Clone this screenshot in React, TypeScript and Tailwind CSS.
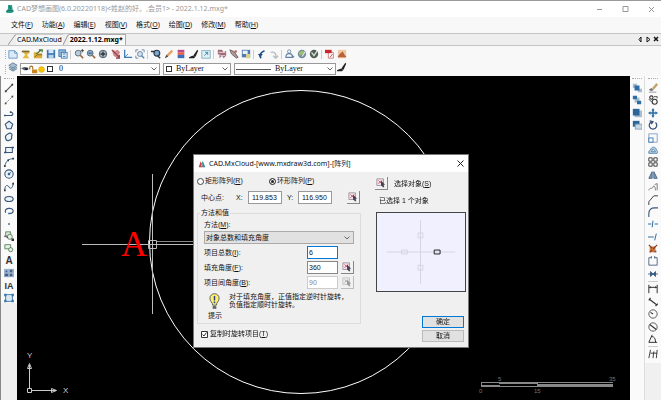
import React, { useState } from "react";
import clsx from "clsx";

const NAVY = "#3a5578";
const BLUE = "#2f6ea5";
const INK = "#333";

// every icon is drawn on a 12x12 grid
const icons: Record<string, React.ReactNode> = {
  // standard toolbar
  new: <><path d="M1 2h7l3 3v6H1z" fill="#dcebf8" stroke="#5d8fc0" /><path d="M8 2v3h3" fill="none" stroke="#5d8fc0" /></>,
  open: <><path d="M1 2h9v3l-3 2 3 4H2l3-4z" fill="#e6b93d" /><path d="M1 2h9v2H1z" fill="#7b6a3c" /></>,
  openWeb: <><path d="M1 4h4l1 1h5v6H1z" fill="#dcae3a" /><path d="M4 6l6-5M7 1h4v3" fill="none" stroke="#4c7a3b" strokeWidth="1.6" /><path d="M2 10l3-3h6" fill="none" stroke="#7a6524" /></>,
  save: <><rect x="1" y="1" width="10" height="10" fill="#3c78b4" /><rect x="3" y="1" width="6" height="4" fill="#d5e6f5" /><rect x="3" y="7" width="6" height="4" fill="#bcd2e6" /></>,
  saveAs: <><rect x="1" y="1" width="8" height="8" fill="#8fb4d6" stroke="#3c78b4" /><rect x="4" y="4" width="7" height="7" fill="#d5e6f5" stroke="#3c78b4" /><path d="M6 6h3M6 9h3" stroke="#3c78b4" /></>,
  zoomWindow: <><circle cx="5" cy="5" r="3.5" fill="#b9cbd9" stroke="#51616e" /><path d="M7.5 7.5l3.5 3.5" stroke="#9b6a45" strokeWidth="2" /><path d="M8 2h4M10 0v4" stroke={INK} /></>,
  zoom: <><circle cx="5" cy="5" r="3.5" fill="#8bb2d6" stroke="#51616e" /><path d="M7.5 7.5l3.5 3.5" stroke="#9b6a45" strokeWidth="2" /><path d="M3 5h4" stroke={INK} /></>,
  zoomAll: <><circle cx="6" cy="6" r="4.5" fill="#a9b9c6" stroke="#3f4b55" /><path d="M3 6h6M6 3v6" stroke={INK} strokeWidth="1.6" /></>,
  pan: <><path d="M1 1l4 1 3-1 3 3-2 3 2 3-3 1-5-3z" fill="#d58888" /><path d="M1 1l9 9M10 7v4H6" fill="none" stroke="#8d3c4c" strokeWidth="1.4" /></>,
  ucs: <><path d="M2 1v9h9" fill="none" stroke="#3a7bb8" strokeWidth="1.5" /><path d="M2 10l4-4" stroke="#3a7bb8" /></>,
  zoomBox: <><path d="M1 4V1h3M8 1h3v3M1 8v3h3" fill="none" stroke="#5d7e9c" /><circle cx="6" cy="6" r="3" fill="#cfdfec" stroke="#5d7e9c" /><path d="M8 8l3 3" stroke="#5d7e9c" strokeWidth="1.6" /></>,
  find: <><circle cx="7" cy="5" r="3.5" fill="#7ba5cf" stroke="#2b3947" strokeWidth="1.4" /><path d="M0 3h5M8 8l3 3" stroke="#2b3947" strokeWidth="1.8" /></>,
  pencil: <><path d="M1 11l2-4 6-6 2 2-6 6z" fill="#e6a467" /><path d="M1 11l2-4 2 2z" fill="#444" /></>,
  layers3: <><rect x="2" y="1" width="8" height="3" fill="#b64a8c" /><rect x="2" y="4" width="8" height="3" fill="#e35b49" /><rect x="2" y="7" width="8" height="4" fill="#3d6db5" /></>,
  brush: <><path d="M5 8l5-7 1 1-3 7z" fill="#222" /><path d="M0 10l4-2 4 1-2 2H0z" fill="#222" /></>,
  expand: <><rect x="1" y="2" width="10" height="9" fill="#dff0f5" stroke="#77a9bd" /><path d="M4 8l4-4M5 4h3v3" fill="none" stroke="#2f80a5" /></>,
  palette: <><path d="M1 1h5l2 3 3-2v6l-3 3-2-3-3 3V6L1 7z" fill="#a16b7a" /><path d="M2 4h8M4 8h6" stroke="#f2e7e2" /></>,
  tool: <><path d="M1 1l5 2 5 7-2 1-6-5z" fill="#a59a9a" stroke="#6d5d60" /><circle cx="8" cy="3" r="1.5" fill="#c2584c" /></>,
  picture: <><rect x="1" y="1" width="10" height="9" fill="#4d79b5" /><rect x="2" y="2" width="6" height="4" fill="#e9f0f6" /><path d="M6 6h5v5H6z" fill="#d9d187" /></>,
  undo: <><path d="M5 11C2 8 4 4 9 2" fill="none" stroke="#234f86" strokeWidth="2" /><path d="M1 6l3 4 3-4z" fill="#234f86" /></>,
  redo: <path d="M2 4c5-1 7 2 6 6M5 8l3 3 3-3" fill="none" stroke="#b4bcc4" strokeWidth="1.6" />,
  people: <><circle cx="5" cy="3" r="2" fill="none" stroke="#6180a4" /><path d="M1 10c0-6 8-6 8 0zM7 6l4 4" fill="none" stroke="#6180a4" strokeWidth="1.3" /></>,
  globe: <><circle cx="6" cy="6" r="5" fill="#6f8ca0" /><path d="M2 4l4-2 3 1-2 3-4 2z" fill="#9fc06b" /><path d="M6 9l4-6" stroke="#eee" strokeWidth="1.4" /></>,
  globeDark: <><circle cx="6" cy="6" r="5" fill="#4f5f58" /><path d="M3 4l3 4 4-6" fill="none" stroke="#d7e3d2" strokeWidth="1.6" /></>,
  pdf: <><path d="M4 4h6v7H4z" fill="#fff" stroke="#b77" /><rect x="0" y="1" width="8" height="4" fill="#c9262c" /><path d="M6 10l3-4" stroke="#c9262c" /></>,
  photo: <><rect x="1" y="1" width="10" height="10" fill="#efc6a5" /><path d="M1 9l3-4 3-2 2 4 2 2v1H1z" fill="#b76339" /></>,
  layerStack: <path d="M6 1l5 3-5 3-5-3zM1 6l5 3 5-3M1 8l5 3 5-3" fill="#a9c0d4" stroke="#607c96" />,
  eye: <><path d="M0 5l5-2 6 1v3L5 8z" fill="#54606c" /><circle cx="8" cy="6" r="2" fill="#222" /></>,
  unlock: <><path d="M1 6V3c0-2 4-2 4 0v3" fill="none" stroke="#a06a18" strokeWidth="1.4" /><rect x="4" y="6" width="7" height="5" fill="#c98522" /></>,
  sun: <circle cx="6" cy="6" r="5" fill="#f7c500" stroke="#dba51c" />,
  // draw toolbar
  line: <><path d="M2 10l8-8" stroke="#555" strokeWidth="1.4" /><path d="M1 9h2v2H1zM9 1h2v2H9z" fill={INK} /></>,
  xline: <><path d="M1 11L11 1" stroke="#8a8a8a" strokeDasharray="3 1" /><path d="M1 9h2v2H1zM9 1h2v2H9z" fill="#444" /></>,
  pline: <><path d="M1 9h7c4 0 3-4 0-4" fill="none" stroke={NAVY} strokeWidth="1.3" /><path d="M0 8h2v2H0zM7 4h2v2H7z" fill={NAVY} /></>,
  polygon: <path d="M6 1.500l4.500 3.500-2 5.500h-5l-2-5.500z" fill="#e4eef7" stroke={NAVY} strokeWidth="1.300" />,
  cloud: <path d="M5 2c3-2 6 1 4 3 1 3-1 5-3 5-3 1-4-1-4-3-1-2 1-4 3-5z" fill="#eef3f8" stroke={NAVY} strokeWidth="1.4" />,
  rect: <><rect x="2" y="3" width="8" height="6" fill="#eef3f8" stroke={NAVY} strokeWidth="1.2" /><path d="M0 8h3v2H0zM9 2h3v2H9z" fill={NAVY} /></>,
  arc: <><path d="M1 11C2 5 6 2 11 2" fill="none" stroke={BLUE} strokeWidth="1.2" /><path d="M0 10h2v2H0zM4 3h2v2H4zM10 1h2v2h-2z" fill={INK} /></>,
  circle: <><circle cx="6" cy="6" r="5" fill="#f2f6fa" stroke={NAVY} strokeWidth="1.3" /><path d="M6 6l3-3M5 5h2v2H5z" stroke={BLUE} /></>,
  spline: <><path d="M1 10c0-8 4-6 5-4s4 3 5-4" fill="none" stroke={NAVY} strokeWidth="1.2" /><path d="M0 9h2v2H0zM10 1h2v2h-2z" fill={INK} /></>,
  ellipse: <ellipse cx="6" cy="6" rx="5" ry="3" fill="#eef3f8" stroke={NAVY} strokeWidth="1.4" />,
  ellipseArc: <><path d="M2 8C-1 2 11 1 11 6c0 2-2 3-5 3" fill="none" stroke={NAVY} strokeWidth="1.4" /><path d="M5 8h2v2H5z" fill={BLUE} /></>,
  point: <path d="M5 5h2v2H5z" fill={NAVY} />,
  insertBlock: <><path d="M2 1h6v5H2z" fill="#dce8dc" stroke="#4d7a55" /><circle cx="7" cy="7" r="3" fill="#e7f0e7" stroke="#4d7a55" /><path d="M0 6l5 2" stroke={INK} /><path d="M9 9h3v3H9z" fill={INK} /></>,
  makeBlock: <><path d="M1 2h7v5H1z" fill="#e7f0e7" stroke="#4d7a55" /><circle cx="8" cy="8" r="2.500" fill="#e7f0e7" stroke="#4d7a55" /></>,
  hatch: <><rect x="0" y="1" width="12" height="10" fill="#9fb3cd" /><path d="M2 3h2v2H2zM1 7h4v3H1zM7 2h3v3H7zM7 7h3v3H7z" fill="#44618b" /></>,
  region: <><rect x="2" y="2" width="8" height="8" fill="#d7e7f4" stroke={BLUE} /><path d="M0 1h3v3H0zM9 1h3v3H9zM0 8h3v3H0zM9 8h3v3H9z" fill={BLUE} opacity=".8" /></>,
  // draw order toolbar
  orderFront: <><path d="M1 1h5v5H1zM7 7h5v4H7z" fill="#a9bccb" /><path d="M3 3h6v6H3z" fill={BLUE} /></>,
  orderBack: <><path d="M3 3h6v6H3z" fill="#a9bccb" /><path d="M1 1h5v4H1zM6 7h5v4H6z" fill={BLUE} /></>,
  orderAbove: <><path d="M3 3h9v8H3z" fill="#a9bccb" /><path d="M1 1h8v8H1z" fill="#2c6698" /></>,
  orderUnder: <><path d="M1 1h8v7H1z" fill="#2c6698" /><path d="M4 5h8v6H4z" fill="#c8d8e4" stroke="#7e9ab2" /></>,
  // modify toolbar
  erase: <><path d="M1 8l3 2 3-2-3-2z" fill="#777" /><path d="M5 6l5-6 2 2-5 6z" fill="#c0a465" /><path d="M1 11h9" stroke="#888" /></>,
  copy: <><circle cx="4" cy="3" r="2" fill="none" stroke={INK} strokeWidth="1.3" /><circle cx="8" cy="8" r="3" fill="none" stroke={INK} strokeWidth="1.3" /><path d="M1 5l4 4M7 2h4v2" fill="none" stroke={INK} /></>,
  move: <path d="M6 0l2 3H7v2h2V4l3 2-3 2V7H7v2h1l-2 3-2-3h1V7H3v1L0 6l3-2v1h2V3H4z" fill={BLUE} />,
  rotate: <path d="M9 3c3 3 1 8-3 8S0 6 3 3l2-1M2 1l4 1-2 3" fill="none" stroke={NAVY} strokeWidth="1.5" />,
  scale: <><rect x="1" y="1" width="10" height="10" fill="#f5f9fc" stroke="#7c9bb8" /><rect x="1" y="6" width="5" height="5" fill="#fff" stroke={BLUE} /></>,
  offset: <><path d="M1 10c-1-3 2-4 2-4 1-5 7-4 7 0 2 1 2 3 1 4z" fill="#b5cde0" stroke="#4c7fa9" /><path d="M4 8l2-3 3 3z" fill="#fff" stroke="#4c7fa9" /></>,
  array: <path d="M1 1h4v4H1zM7 1h4v4H7zM1 7h4v4H1zM7 7h4v4H7z" fill="#fff" stroke="#444" strokeWidth="1.2" />,
  mirror: <><path d="M5 2v8H1z" fill="#7f9fc0" stroke={NAVY} /><path d="M7 2v8h4z" fill="#7f9fc0" stroke={NAVY} /></>,
  editSpline: <path d="M1 10c1-4 4-1 5-4s3 0 3 4M8 3l3-1v8" fill="none" stroke="#666" />,
  chamfer: <path d="M1 12V8l6-7h5" fill="none" stroke="#444" strokeWidth="1.2" />,
  fillet: <path d="M1 12V8c0-5 3-7 7-7h4" fill="none" stroke={NAVY} strokeWidth="1.3" />,
  trim: <path d="M0 6h4M8 6h4M6 2l-1 8" fill="none" stroke={BLUE} strokeWidth="1.2" />,
  extend: <path d="M0 6h7M10 2L8 10" fill="none" stroke={BLUE} strokeWidth="1.2" />,
  explode: <><path d="M2 3h7v7H2z" fill="#c77942" /><path d="M1 1l4 4M11 1L6 6M2 10l3-3" stroke="#8a3a20" strokeWidth="1.4" /><path d="M8 8h2v2H8z" fill="#555" /></>,
  breakAt: <path d="M4 2H1v9h10V2H8M4 0v3M8 0v3" fill="none" stroke={NAVY} />,
  join: <path d="M0 6h5M7 6h5M3 3l3 3-3 3zM9 3L6 6l3 3z" fill={BLUE} stroke={NAVY} />,
  // dimension toolbar
  dimLinear: <path d="M1 1v10M11 1v10M1 4h10M3 3v2M9 3v2" fill="none" stroke={INK} strokeWidth="1.2" />,
  dimAligned: <path d="M2 3l8 6M1 4l2-3M9 11l3-3" fill="none" stroke={INK} strokeWidth="1.4" />,
  dimRadius: <><circle cx="6" cy="6" r="5" fill="none" stroke="#444" /><path d="M6 6L3 4" stroke={INK} strokeWidth="1.3" /></>,
  dimDiameter: <><circle cx="6" cy="6" r="5" fill="none" stroke="#444" /><path d="M2 3l8 6" stroke={INK} strokeWidth="1.3" /></>,
  dimAngular: <path d="M5 1L1 10h10M4 3c4 0 5 3 5 7" fill="none" stroke={INK} strokeWidth="1.2" />,
  dimContinue: <path d="M3 1L1 11M11 1l-1 10M3 5h8M7 3L6 11" fill="none" stroke={INK} strokeWidth="1.1" />,
  // other
  pick: <><path d="M1 1h8v8H1z" fill="#f0e4e9" stroke="#9a8b98" /><path d="M3 3l4 4M7 3L3 7" stroke="#c2465a" /><path d="M6 3l5 5H9l1 3H8L7 9 6 10z" fill="#445" /></>,
};

function Icon({ name, className = "size-[10px]" }: { name: string; className?: string }) {
  return (
    <svg viewBox="0 0 12 12" className={clsx("block shrink-0", className)} aria-hidden="true">
      {icons[name]}
    </svg>
  );
}

function ToolButton({ name }: { name: string }) {
  return (
    <button type="button" aria-label={name} className="size-[10px] shrink-0">
      {name === "text" && <span className="block text-center font-['Liberation_Sans'] text-[10px] leading-[10px] font-bold text-[#333]">A</span>}
      {name === "mtext" && <span className="block text-center font-['Liberation_Sans'] text-[9px] leading-[10px] font-bold text-[#333]">IA</span>}
      {icons[name] && <Icon name={name} />}
    </button>
  );
}

const menus = [
  ["文件", "F"], ["功能", "A"], ["编辑", "E"], ["视图", "V"],
  ["格式", "O"], ["绘图", "D"], ["修改", "M"], ["帮助", "H"],
];

const standardGroups = [
  { width: "w-[60px]", tools: ["new", "open", "openWeb", "save", "saveAs"] },
  { width: "w-[71px]", tools: ["zoomWindow", "zoom", "zoomAll", "pan", "ucs", "zoomBox"] },
  { width: "w-[60px]", tools: ["find", "pencil", "layers3", "brush", "expand"] },
  { width: "w-[34px]", tools: ["palette", "tool", "picture"] },
  { width: "w-[22px]", tools: ["undo", "redo"] },
  { width: "w-[34px]", tools: ["people", "globe", "globeDark"] },
  { width: "w-[22px]", tools: ["pdf", "photo"] },
];

const drawTools = [
  "line", "xline", "pline", "polygon", "cloud", "rect", "arc", "circle", "spline",
  "ellipse", "ellipseArc", "point", "insertBlock", "makeBlock", "text", "hatch", "mtext", "region",
];
const orderTools = ["orderFront", "orderBack", "orderAbove", "orderUnder"];
const modifyTools = [
  "erase", "copy", "move", "rotate", "scale", "offset", "array", "mirror",
  "editSpline", "chamfer", "fillet", "trim", "extend", "explode", "breakAt", "join",
];
const dimTools = ["dimLinear", "dimAligned", "dimRadius", "dimDiameter", "dimAngular"];

function Key({ k }: { k: string }) {
  return <>(<u>{k}</u>)</>;
}

function Chevron() {
  return (
    <svg viewBox="0 0 8 8" className="pointer-events-none size-2 shrink-0" fill="none" stroke="#666">
      <path d="M1.500 2.500L4 5l2.500-2.500" />
    </svg>
  );
}

function TitleBar() {
  return (
    <header className="flex h-[17px] items-center border-t border-[#9a9a9a] bg-white pr-[6px] pl-[6px] text-[#999]">
      <svg viewBox="0 0 12 12" className="mr-[3px] size-2">
        <path d="M3 0h6l1 7 2 3-4 2H1L0 9l3-3z" fill="#2a9d8a" />
        <path d="M1 10c3-4 5 0 10-2M5 2l2 4" fill="none" stroke="#12695f" strokeWidth="1.500" />
      </svg>
      <h1 className="flex-1 truncate">{"CAD梦想画图(6.0.20220118)<姓赵的好。,会员1> - 2022.1.12.mxg*"}</h1>
      <div className="flex gap-[19px]">
        {["M1 3.500h5", "M1 .5h5v5H1z", "M1 1l5 5M6 1L1 6"].map((d, i) => (
          <button key={d} type="button" aria-label={["Minimize", "Maximize", "Close"][i]}>
            <svg viewBox="0 0 7 7" className="size-[7px]" fill="none" stroke="#999"><path d={d} /></svg>
          </button>
        ))}
      </div>
    </header>
  );
}

function TabStrip() {
  return (
    <div className="flex h-[13px] items-end border-y border-[#c4c4c4] bg-[#eeeeee] text-black">
      <svg viewBox="0 0 8 11" className="ml-2 h-[11px] w-2" fill="none" stroke="#999"><path d="M0 11L7 1h1" /></svg>
      <button type="button" className="h-[11px] border-t border-[#ccc] bg-[#f5f5f5] px-px leading-[10px]">CAD.MxCloud</button>
      <svg viewBox="0 0 6 11" className="h-[11px] w-[6px]" fill="none" stroke="#999"><path d="M0 11L5 1h1" /></svg>
      <button type="button" className="h-[11px] border-t border-r border-[#aaa] bg-[#fafafa] pr-[2px] pl-px leading-[10px] font-bold">2022.1.12.mxg*</button>
      <div className="ml-auto flex gap-[2px] pr-[2px] pb-[2px]">
        {["M4 1L2 3.500 4 6z", "M2 1l3 2.500L2 6z", "M1 1l4 4M5 1L1 5"].map((d, i) => (
          <button key={d} type="button" aria-label={["Previous tab", "Next tab", "Close tab"][i]}>
            <svg viewBox="0 0 6 7" className="h-[7px] w-[6px]" fill="none" stroke="#111" strokeWidth={i === 2 ? 1.5 : 1}><path d={d} /></svg>
          </button>
        ))}
      </div>
    </div>
  );
}

function Grip() {
  return <span className="h-[9px] border-l border-dotted border-[#aaa]" />;
}

function Toolbars() {
  return (
    <div className="bg-[#f8f8f8] pl-[5px]">
      <div className="flex h-4 items-center">
        <Grip />
        <div className="ml-[2px] flex items-center">
          {standardGroups.map((group, i) => (
            <React.Fragment key={i}>
              {i > 0 && <span className="mr-[3px] ml-[2px] h-[9px] w-px bg-[#ccc]" />}
              <div className={clsx("flex justify-between", group.width)}>
                {group.tools.map((t) => <ToolButton key={t} name={t} />)}
              </div>
            </React.Fragment>
          ))}
        </div>
      </div>
      <div className="flex h-[14px] items-center font-['Liberation_Serif'] text-[8px]">
        <Grip />
        <div className="mr-[2px] ml-[2px]"><ToolButton name="layerStack" /></div>
        <div className="flex h-3 w-[140px] items-center border border-[#999] bg-white pr-px">
          <Icon name="eye" className="size-2" />
          <Icon name="unlock" className="size-[9px]" />
          <Icon name="sun" className="size-[7px]" />
          <span className="mx-[2px] size-[6px] border border-[#333]" />
          <select aria-label="Layer" className="flex-1 appearance-none bg-transparent pl-1 leading-[10px]"><option>0</option></select>
          <Chevron />
        </div>
        <div className="ml-[3px] flex h-3 w-[68px] items-center border border-[#999] bg-white pr-px pl-[2px]">
          <span className="size-[6px] border border-[#333]" />
          <select aria-label="Color" className="min-w-0 flex-1 appearance-none bg-transparent pl-1 leading-[10px]"><option>ByLayer</option></select>
          <Chevron />
        </div>
        <div className="ml-[3px] flex h-3 w-[102px] items-center border border-[#999] bg-white pr-px pl-px">
          <span className="h-px w-[35px] bg-[#555]" />
          <select aria-label="Linetype" className="min-w-0 flex-1 appearance-none bg-transparent pl-1 leading-[10px]"><option>ByLayer</option></select>
          <Chevron />
        </div>
        <div className="ml-px"><ToolButton name="brush" /></div>
      </div>
    </div>
  );
}

function PickButton({ disabled, label }: { disabled?: boolean; label: string }) {
  return (
    <button
      type="button"
      aria-label={label}
      disabled={disabled}
      className="flex size-[13px] shrink-0 items-center justify-center border-r border-b border-[#888] bg-[#f2f2f2] disabled:opacity-50 disabled:grayscale"
    >
      <Icon name="pick" />
    </button>
  );
}

function ArrayDialog() {
  const [x, setX] = useState("119.853");
  const [y, setY] = useState("116.950");
  const [count, setCount] = useState("6");
  const [angle, setAngle] = useState("360");
  const [polar, setPolar] = useState(true);
  const [rotate, setRotate] = useState(true);

  const field = "h-[13px] min-w-0 border bg-white leading-[11px] outline-none";
  const radio = "size-[7px] appearance-none rounded-full border border-[#444] bg-white checked:bg-[#222] checked:shadow-[inset_0_0_0_1px_white]";

  return (
    <section
      role="dialog"
      aria-label="阵列"
      className="absolute top-[78px] left-[176px] w-[276px] border border-[#777] bg-[#f0f0f0] font-['Liberation_Sans','Noto_Sans_CJK_SC',sans-serif] text-[7px] leading-[8px] text-[#111]"
    >
      <div className="flex h-[17px] items-center bg-white pr-1 pl-[4px] font-['Noto_Sans','Noto_Sans_CJK_SC',sans-serif]">
        <svg viewBox="0 0 12 12" className="mr-[3px] size-2">
          <path d="M1 11l3-9 2 4-2 5z" fill="#d33b4a" />
          <path d="M7 1l4 10H8L6 5z" fill="#2a8f9d" />
          <path d="M3 11l4-4 2 4z" fill="#777" />
        </svg>
        <h2 className="flex-1">CAD.MxCloud-[www.mxdraw3d.com]-[阵列]</h2>
        <button type="button" aria-label="Close dialog">
          <svg viewBox="0 0 7 7" className="size-[7px]" fill="none" stroke="#222"><path d="M.5.5l6 6M6.500.5l-6 6" /></svg>
        </button>
      </div>

      <div className="flex justify-between pt-[5px] pr-[2px] pb-[5px] pl-[3px]">
        <div className="w-[163px] pb-1">
          <div className="flex h-2 items-center">
            <label className="flex w-[72px] items-center gap-px">
              <input type="radio" name="kind" className={radio} checked={!polar} onChange={() => setPolar(false)} />
              <span>矩形阵列<Key k="R" /></span>
            </label>
            <label className="flex items-center gap-px">
              <input type="radio" name="kind" className={radio} checked={polar} onChange={() => setPolar(true)} />
              <span>环形阵列<Key k="P" /></span>
            </label>
          </div>

          <div className="mt-[6px] flex h-[13px] items-center pl-1">
            <span className="w-[35px]">中心点:</span>
            <label htmlFor="cx" className="w-3">X:</label>
            <input id="cx" className={clsx(field, "w-[34px] border-[#999] px-[3px]")} value={x} onChange={(e) => setX(e.target.value)} />
            <label htmlFor="cy" className="w-4 pl-[5px]">Y:</label>
            <input id="cy" className={clsx(field, "w-[34px] border-[#999] px-[3px]")} value={y} onChange={(e) => setY(e.target.value)} />
            <div className="ml-auto"><PickButton label="Pick center" /></div>
          </div>

          <fieldset className="mt-[5px] border border-[#dcdcdc] px-[6px] pb-[3px]">
            <legend className="-ml-1 px-px">方法和值</legend>
            <label htmlFor="method" className="mt-1 block">方法<Key k="M" />:</label>
            <div className="mt-[2px] flex h-[13px] items-center border border-[#aaa] bg-[#e1e1e1] pr-[2px]">
              <select id="method" className="h-full flex-1 appearance-none bg-transparent pl-px leading-[11px]">
                <option>对象总数和填充角度</option>
              </select>
              <Chevron />
            </div>
            <div className="mt-[2px] flex flex-col gap-[2px]">
              <div className="flex items-center">
                <label htmlFor="count" className="w-[103px]">项目总数<Key k="I" />:</label>
                <input id="count" autoFocus className={clsx(field, "w-[31px] border-[#0078d7] px-px")} value={count} onChange={(e) => setCount(e.target.value)} />
              </div>
              <div className="flex items-center">
                <label htmlFor="angle" className="w-[103px]">填充角度<Key k="F" />:</label>
                <input id="angle" className={clsx(field, "mr-[3px] w-[31px] border-[#888] px-px")} value={angle} onChange={(e) => setAngle(e.target.value)} />
                <PickButton label="Pick fill angle" />
              </div>
              <div className="flex items-center">
                <label htmlFor="between" className="w-[103px]">项目间角度<Key k="B" />:</label>
                <input id="between" disabled className={clsx(field, "mr-[3px] w-[31px] border-[#ccc] bg-[#f0f0f0] px-px text-[#888]")} defaultValue="90" />
                <PickButton label="Pick item angle" disabled />
              </div>
            </div>
            <div className="mt-1 flex gap-[9px] pl-[5px]">
              <svg viewBox="0 0 12 18" className="h-[17px] w-[11px]">
                <path d="M4 13C4 10 1 9 1 5.500a5 5 0 0 1 10 0C11 9 8 10 8 13z" fill="#fff26b" stroke="#555" />
                <path d="M4 14h4v3H4z" fill="#666" />
                <path d="M6 3v5M6 9v2" stroke="#2b3b8c" strokeWidth="1.600" />
              </svg>
              <p>对于填充角度，正值指定逆时针旋转，<br />负值指定顺时针旋转。</p>
            </div>
            <p className="mt-[2px] pl-[4px]">提示</p>
          </fieldset>

          <label className="mt-[6px] flex items-center gap-[2px] pl-1">
            <input type="checkbox" className="peer sr-only" checked={rotate} onChange={(e) => setRotate(e.target.checked)} />
            <svg viewBox="0 0 7 7" className="size-[7px] bg-white" fill="none" stroke="#333">
              <path d="M.5.5h6v6h-6z" />
              {rotate && <path d="M1.500 3.500L3 5l2.500-3.500" />}
            </svg>
            <span>复制时旋转项目<Key k="T" /></span>
          </label>
        </div>

        <div className="flex w-[91px] flex-col">
          <div className="flex items-center gap-[6px]">
            <PickButton label="Select objects" />
            <span>选择对象<Key k="S" /></span>
          </div>
          <p className="mt-[7px] pl-1">已选择 1 个对象</p>
          <svg viewBox="0 0 90 79" className="mt-[7px] ml-px h-[80px] w-[90px] border border-[#444] bg-[#f0f0ff]" fill="none" stroke="#d5d5e2">
            <path d="M10 39.500h70M44.500 7v65" />
            <path d="M25 37.500h6v4h-6zM42 20h5v5h-5zM42 53h5v5h-5z" />
            <path d="M58.500 37.500h6v4h-6z" stroke="#222" />
          </svg>
          <div className="mt-auto mr-[2px] ml-auto flex w-[42px] flex-col gap-[2px]">
            <button type="button" className="h-3 border border-[#0078d7] bg-[#e1e1e1] leading-[10px]">确定</button>
            <button type="button" className="h-3 border border-[#bbb] bg-[#e1e1e1] leading-[10px]">取消</button>
          </div>
        </div>
      </div>
    </section>
  );
}

function Drawing() {
  return (
    <main className="relative min-w-0 flex-1 overflow-hidden bg-black">
      <svg className="absolute top-0 left-0 h-full w-full" fill="none" stroke="#fff">
        <circle cx="284" cy="166" r="151.500" />
        <path d="M65 168.500h120M135.500 98v140" stroke="#bbb" />
        <path d="M139 165.500h50" stroke="#888" />
        <path d="M131.500 164.500h8v8h-8z" stroke="#bbb" />
        <text x="117" y="180" textAnchor="middle" className="font-['Liberation_Serif']" fontSize="36" fill="#f00" stroke="none">A</text>
      </svg>
      <svg viewBox="0 0 50 50" className="absolute bottom-0 left-[5px] size-[50px]" fill="none" stroke="#ccc">
        <path d="M5.500 38.500h4v4h-4zM7.500 38V15M10 40.500h24M5.500 18.500l2-5 2 5zM29.500 38.500l5 2-5 2z" />
        <g fill="#ccc" stroke="none" fontSize="8" fontFamily="Liberation Sans">
          <text x="5" y="8">Y</text>
          <text x="41" y="43">X</text>
        </g>
      </svg>
      <svg viewBox="0 0 140 24" className="absolute right-[13px] bottom-[4px] h-6 w-[140px]" fill="#888">
        <path d="M4 10h132v1H4zM4 10h1v5H4zM4 13h19v2H4zM22 10h39v2H22zM22 14h39v1H22zM60 12h76v3H60z" />
        <g fontSize="6" fontFamily="Liberation Sans" fill="#777">
          <text x="2" y="21">0</text>
          <text x="21" y="9">5</text>
          <text x="57" y="21">15</text>
          <text x="132" y="9">35</text>
        </g>
      </svg>
      <ArrayDialog />
    </main>
  );
}

function VerticalGrip() {
  return <span className="mt-[2px] mb-1 w-[10px] border-t border-dotted border-[#aaa]" />;
}

export default function App() {
  return (
    <div className="flex h-screen flex-col overflow-hidden bg-[#f0f0f0] font-['Noto_Sans','Noto_Sans_CJK_SC',sans-serif] text-[7px] text-[#111]">
      <TitleBar />
      <nav className="flex h-4 items-center gap-[9px] bg-[#f8f8f8] pl-[11px]">
        {menus.map(([label, k]) => (
          <button key={k} type="button">{label}<Key k={k} /></button>
        ))}
      </nav>
      <TabStrip />
      <Toolbars />

      <div className="flex min-h-0 flex-1">
        <aside className="w-[17px] shrink-0 border-l border-[#888]">
          <div className="flex flex-col items-center bg-[#fafafa]">
            <VerticalGrip />
            <div className="flex h-[220px] flex-col justify-between">
              {drawTools.map((t) => <ToolButton key={t} name={t} />)}
            </div>
          </div>
        </aside>

        <Drawing />

        <aside className="flex w-[15px] shrink-0 flex-col items-center border-r border-[#ddd] bg-[#fafafa]">
          <VerticalGrip />
          <div className="flex h-[47px] flex-col justify-between">
            {orderTools.map((t) => <ToolButton key={t} name={t} />)}
          </div>
        </aside>
        <aside className="w-4 shrink-0">
          <div className="flex flex-col items-center bg-[#fafafa] pb-1">
            <VerticalGrip />
            <div className="flex h-[196px] flex-col justify-between">
              {modifyTools.map((t) => <ToolButton key={t} name={t} />)}
            </div>
            <span className="my-[2px] h-px w-[10px] bg-[#ccc]" />
            <div className="flex h-[60px] flex-col justify-between">
              {dimTools.map((t) => <ToolButton key={t} name={t} />)}
            </div>
            <span className="my-[2px] h-px w-[10px] bg-[#ccc]" />
            <ToolButton name="dimContinue" />
          </div>
        </aside>
      </div>
    </div>
  );
}
